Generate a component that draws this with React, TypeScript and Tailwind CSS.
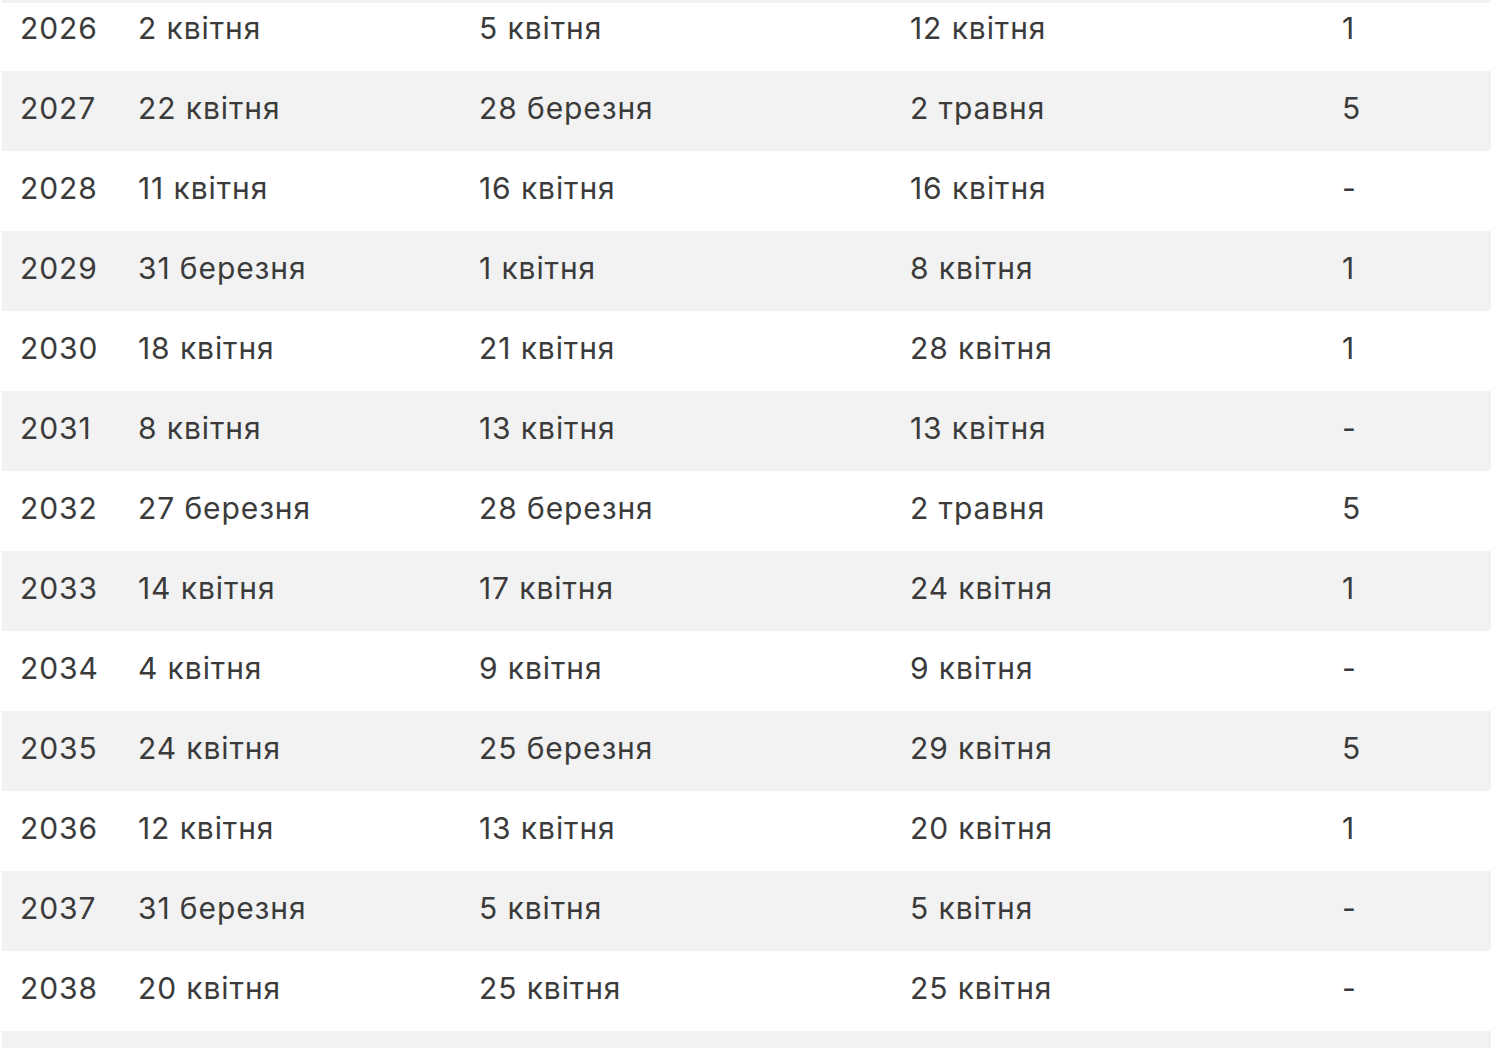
const rows: [string, string, string, string, string][] = [
  ['2026', '2 квітня', '5 квітня', '12 квітня', '1'],
  ['2027', '22 квітня', '28 березня', '2 травня', '5'],
  ['2028', '11 квітня', '16 квітня', '16 квітня', '-'],
  ['2029', '31 березня', '1 квітня', '8 квітня', '1'],
  ['2030', '18 квітня', '21 квітня', '28 квітня', '1'],
  ['2031', '8 квітня', '13 квітня', '13 квітня', '-'],
  ['2032', '27 березня', '28 березня', '2 травня', '5'],
  ['2033', '14 квітня', '17 квітня', '24 квітня', '1'],
  ['2034', '4 квітня', '9 квітня', '9 квітня', '-'],
  ['2035', '24 квітня', '25 березня', '29 квітня', '5'],
  ['2036', '12 квітня', '13 квітня', '20 квітня', '1'],
  ['2037', '31 березня', '5 квітня', '5 квітня', '-'],
  ['2038', '20 квітня', '25 квітня', '25 квітня', '-'],
];

function Row({ cells, striped }: { cells: string[]; striped: boolean }) {
  return (
    <div
      className={`grid shrink-0 grid-cols-[118px_341px_431px_432px_1fr] h-[80px] items-center pb-[6px] ${
        striped ? 'bg-[#f2f2f2]' : 'bg-white'
      }`}
    >
      {cells.map((c, i) => (
        <div key={i} className="pl-[18px] whitespace-nowrap">
          {c}
        </div>
      ))}
    </div>
  );
}

export default function App() {
  return (
    <div className="h-[1053px] w-[1500px] overflow-hidden bg-white">
      <div
        className="ml-[2px] mr-[9px] text-[30px] tracking-[0.03em] text-[#3b3b3b]"
        style={{ fontFamily: 'Inter, "Noto Sans", sans-serif' }}
      >
        {/* tail of the previous striped row */}
        <div className="h-[3px] bg-[#f2f2f2]" />
        <div className="h-[68px] overflow-hidden flex flex-col justify-end">
          <Row cells={rows[0]} striped={false} />
        </div>
        {rows.slice(1).map((r, i) => (
          <Row key={r[0]} cells={r} striped={i % 2 === 0} />
        ))}
        {/* top of the next striped row */}
        <div className="h-[17px] bg-[#f2f2f2]" />
      </div>
    </div>
  );
}
